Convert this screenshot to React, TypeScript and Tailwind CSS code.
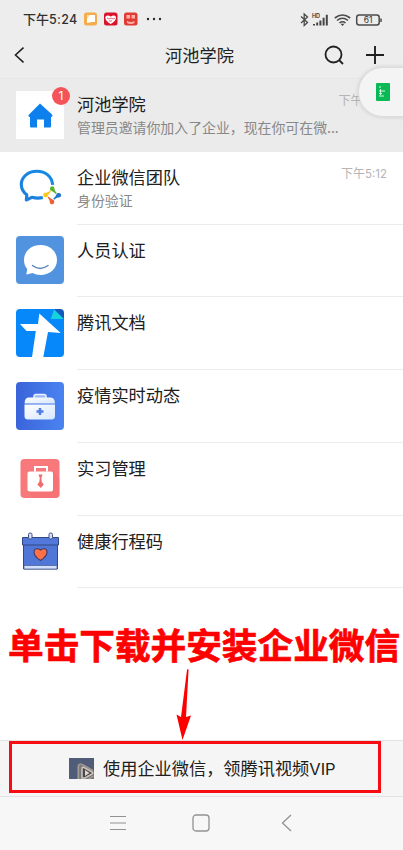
import React from "react";

const HouseIcon = () => (
  <svg viewBox="0 0 48 48" className="size-12 bg-white">
    <path d="M24 12.500 36 23.500q1.200 2.500-1 2.500v9.500q0 1-1 1h-6v-8h-7v8h-6q-1 0-1-1V26q-2.500 0-1-2.500Z" fill="#0e80ee" />
  </svg>
);

const WeComIcon = () => (
  <svg viewBox="0 0 48 48" className="size-12 overflow-visible">
    <defs>
      <linearGradient id="bubble" x1="0" y1="1" x2="1" y2="0">
        <stop offset="0" stopColor="#1d7fdc" />
        <stop offset="1" stopColor="#148be6" />
      </linearGradient>
    </defs>
    <path
      d="M36.700 21.800C35.800 13.500 29.500 8.300 20.800 8.300 12 8.300 5.300 14 5.300 21.500c0 4.300 2 7.700 5.500 10.300L10.300 37l5.500-2.700c3.800 1 7.400 1.100 11 .3"
      fill="none" stroke="url(#bubble)" strokeWidth="3.100" strokeLinejoin="round"
    />
    <path d="M36.200 24.500 44 32.200 36.200 40l-8-7.800Z" fill="#fff" />
    <path d="M34 25.500c.3-3.200 4.800-3 4.500.3.200 1.700 1 3 2.300 4.200l-1 1c-1.700-1.700-3.300-2.700-4.600-3.200-.8-.4-1.300-1.200-1.200-2.300Z" fill="#54b42a" />
    <path d="M42.800 30c3.300.3 3 4.700-.2 4.500-1.800.2-3.200 1-4.300 2.300l-1-1c1.700-1.700 2.700-3.300 3.200-4.600.4-.8 1.200-1.300 2.300-1.200Z" fill="#2277cc" />
    <path d="M38.300 39c-.3 3.200-4.700 3-4.500-.3-.2-1.700-1-3-2.300-4.200l1-1c1.700 1.700 3.300 2.700 4.600 3.200.8.400 1.300 1.200 1.200 2.300Z" fill="#ed6232" />
    <path d="M29.500 34.300c-3.200-.3-3-4.700.3-4.500 1.700-.2 3-1 4.200-2.300l1 1c-1.700 1.700-2.700 3.300-3.200 4.600-.4.800-1.200 1.300-2.300 1.200Z" fill="#fac71d" />
  </svg>
);

const SmileIcon = () => (
  <svg viewBox="0 0 48 48" className="size-12">
    <rect width="48" height="48" rx="4" fill="#5293df" />
    <path d="M24.500 9C34 9 41 15.500 41 24s-7 15-16.500 15c-3 0-5.500-.7-8-2-2.500.6-4 1-6.200 1.600L11.300 33C9 30.500 8 27.500 8 24 8 15.500 15 9 24.500 9Z" fill="#fff" />
    <path d="M16.500 29.500q7.500 6 15.500 0" fill="none" stroke="#5d86b8" strokeWidth="1.500" strokeLinecap="round" />
  </svg>
);

const DocsIcon = () => (
  <svg viewBox="0 0 48 48" className="size-12">
    <path d="M4 0h34.500L48 9.500V44q0 4-4 4H4q-4 0-4-4V4q0-4 4-4Z" fill="#0688fa" />
    <path d="M38 0h6q4 0 4 4v7Z" fill="#1559bd" />
    <path d="M38 .5 34.800 10H48Z" fill="#16d2dc" />
    <path d="M23.300 4.500 44.700 24 32 23 27.300 48H16l3.800-26H10.500L4 15h18Z" fill="#fff" />
  </svg>
);

const MedicalIcon = () => (
  <svg viewBox="0 0 48 48" className="size-12">
    <defs>
      <linearGradient id="med" x2="1"><stop stopColor="#3a64da" /><stop offset="1" stopColor="#4a83f0" /></linearGradient>
      <linearGradient id="kit" x2="1" y2="1"><stop stopColor="#fff" /><stop offset="1" stopColor="#d5e6fc" /></linearGradient>
    </defs>
    <rect width="48" height="48" rx="4" fill="url(#med)" />
    <path d="M18 16v-1.500q0-2 2-2h8q2 0 2 2V16" fill="#9db6f5" stroke="#edf3ff" strokeWidth="1.500" />
    <path d="M12.500 15.500h22q3 0 4 3l.5 3H8.500l.5-3q1-3 3.500-3Z" fill="url(#kit)" />
    <path d="M8.500 22.500h30.500V34q0 3.500-3.500 3.500H12q-3.500 0-3.500-3.500Z" fill="url(#kit)" />
    <path d="M24 26v7M20.500 29.500h7" stroke="#527be5" strokeWidth="2.500" />
  </svg>
);

const BriefcaseIcon = () => (
  <svg viewBox="0 0 48 48" className="size-12">
    <rect x="4.500" y="5" width="39" height="39" rx="4" fill="#f8797b" />
    <path d="m37 18 6.500 7v15q0 4-4 4H17l-6-7Z" fill="#ef6b6d" opacity=".4" />
    <path d="M19 17.500V13h12v4.500" fill="none" stroke="#fff" strokeWidth="2" />
    <rect x="11.500" y="17.500" width="25.500" height="20" rx="2" fill="#fff" />
    <path d="M22.500 20.500h4l-1 3h-2ZM23.800 23.500h1.500l.5 4.500 2 2.500-3 3.500-3.500-3.500 2-2.500Z" fill="#f16b6d" />
  </svg>
);

const CalendarIcon = () => (
  <svg viewBox="0 0 48 48" className="size-12">
    <path d="M7.500 15h34v27h-34Z" fill="#5076d8" stroke="#32497f" />
    <path d="M8 38.500h33V42H8Z" fill="#d2dfff" stroke="#44598e" strokeWidth=".7" />
    <path d="M6.500 10.500h36V18h-36Z" fill="#5378dc" stroke="#32497f" />
    <g fill="#d5defc" stroke="#3e527f"><rect x="12.500" y="6" width="3.500" height="6" rx="1.500" /><rect x="33" y="6" width="3.500" height="6" rx="1.500" /></g>
    <path d="M24.500 33.500c-11-7-6-15 0-10.500 6-4.500 11 3.500 0 10.500Z" fill="#ff7045" stroke="#3c3c68" strokeWidth="1.100" />
  </svg>
);

type Row = { title: string; sub?: string; time?: string; badge?: string; icon: React.ReactNode };

const rows: Row[] = [
  { title: "河池学院", sub: "管理员邀请你加入了企业，现在你可在微...", time: "5:24", badge: "1", icon: <HouseIcon /> },
  { title: "企业微信团队", sub: "身份验证", time: "5:12", icon: <WeComIcon /> },
  { title: "人员认证", icon: <SmileIcon /> },
  { title: "腾讯文档", icon: <DocsIcon /> },
  { title: "疫情实时动态", icon: <MedicalIcon /> },
  { title: "实习管理", icon: <BriefcaseIcon /> },
  { title: "健康行程码", icon: <CalendarIcon /> },
];

const StatusBar = () => (
  <div className="flex h-[38px] items-center justify-between pl-[23px] pr-[19px]">
    <div className="flex items-center">
      <span className="w-[54px] whitespace-nowrap text-[13px] font-medium leading-5 text-[#303030]">下午<span className="font-['Inter'] text-[12.500px] tracking-[0.3px]">5:24</span></span>
      <svg width="80" height="14" viewBox="0 0 80 14" className="ml-[7px]">
        <rect y=".5" width="13" height="13" rx="2.500" fill="#f5ac4b" />
        <path d="M3 3h8v7H8l-5 1Z" fill="#fff" /><path d="m3 3 3 0-3 4Z" fill="#ffdc9a" />
        <rect x="20" y=".5" width="13.500" height="13" rx="2.500" fill="#d9152d" />
        <path d="M26.700 12c-9-5-5-11 0-7.500 5-3.500 9 2.500 0 7.500Z" fill="#fff" />
        <path d="m23 6 2 1 2-1 2 1 2-1m-6 3h3" fill="none" stroke="#dd6b78" />
        <rect x="40" y=".5" width="13.500" height="13" rx="2.500" fill="#df3c35" />
        <path d="M42.500 3h3.500v3.500h-3.500zm5 0H51v3.500h-3.500zM43 9q4 2 7.500 0v2q-3.500 2-7.500 0Z" fill="#ffb1a5" />
        <g fill="#292929"><circle cx="64" cy="7" r="1.200" /><circle cx="70" cy="7" r="1.200" /><circle cx="76" cy="7" r="1.200" /></g>
      </svg>
    </div>
    <svg width="84" height="16" viewBox="0 0 84 16" className="mt-[2px]" fill="none" stroke="#4b4b4b">
      <path d="m1 4.500 6.500 6-3.300 3V2l3.300 3L1 11" strokeWidth="1.300" />
      <g fill="#454545" stroke="none">
        <path d="M13 12h2v1.500h-2zm3.200-1.500h2v3h-2zm3.200-2h2v5h-2zm3.200-2.700h2v7.700h-2zm3.200-3h2v10.700h-2z" />
      </g>
      <text x="12" y="6" fill="#333" stroke="none" className="font-['Inter'] text-[5.500px] font-semibold">HD</text>
      <path d="M34.800 6q7.700-6 15.400 0M37 8.500q5.500-4.500 11 0M39.500 11q3-2.500 6 0" strokeWidth="1.600" />
      <path d="m40.500 11.700 2 2.300 2-2.300Z" fill="#444" stroke="none" />
      <rect x="56.700" y="3" width="22.500" height="10" rx="2.500" strokeWidth="1.500" />
      <path d="M81 6.500v3.500" strokeWidth="1.500" />
      <text x="68" y="11" textAnchor="middle" fill="#333" stroke="none" className="font-['Inter'] text-[8.500px]">61</text>
    </svg>
  </div>
);

const Header = () => (
  <div className="grid h-[41px] grid-cols-[1fr_auto_1fr] items-center border-b border-[#e7e7e7] pl-[14px] pr-[19px] pb-[7px]">
    <svg width="10" height="18" viewBox="0 0 10 18" fill="none" stroke="#222" strokeWidth="1.600"><path d="M9.500 1.500 1.500 9l8 7.500" /></svg>
    <h1 className="ml-px text-[17.200px] leading-6 text-[#222]">河池学院</h1>
    <div className="flex justify-end gap-[22px]">
      <svg width="20" height="20" viewBox="0 0 20 20" fill="none" stroke="#202020" strokeWidth="1.800"><circle cx="9.500" cy="9.500" r="8" /><path d="m15 15 4 4" /></svg>
      <svg width="18" height="20" viewBox="0 0 18 20" fill="none" stroke="#202020" strokeWidth="1.900"><path d="M9 1v18M0 10h18" /></svg>
    </div>
  </div>
);

export default function App() {
  return (
    <div className="relative flex h-[850px] w-[403px] flex-col overflow-hidden bg-white font-['Noto_Sans_CJK_SC',sans-serif] text-[#202020]">
      <header className="bg-[#ededed]"><StatusBar /><Header /></header>
      <main className="flex-1">
        {rows.map((r, i) => (
          <div key={r.title} className={`flex h-[72.750px] pl-4 ${i === 0 ? "bg-[#ebebeb]" : ""}`}>
            <div className="relative mt-[11.500px] size-12 shrink-0">
              {r.icon}
              {r.badge && <span className="absolute -top-[4px] left-9 flex size-[18px] items-center justify-center rounded-full bg-[#f45458] font-['Inter'] text-[12px] text-white">{r.badge}</span>}
            </div>
            <div className={`ml-[13px] flex flex-1 justify-between border-b pr-4 ${i === 0 ? "border-[#ebebeb]" : "border-[#ececec]"}`}>
              <div className="pt-[12px]">
                <h2 className="whitespace-nowrap text-[17.200px] leading-[25px]">{r.title}</h2>
                {r.sub && <p className="w-64 whitespace-nowrap text-[13.900px] leading-[22px] text-[#888]">{r.sub}</p>}
              </div>
              {r.time && <time className="-ml-20 whitespace-nowrap pt-[11px] text-[12px] leading-5 text-[#b5b5b5]">下午<span className="font-['Inter'] text-[11.500px]">{r.time}</span></time>}
            </div>
          </div>
        ))}
      </main>
      <div className="flex h-[57px] items-center border-y border-[#e2e2e2] bg-[#f5f5f5] pl-[69px]">
        <svg width="25" height="21" viewBox="0 0 25 21">
          <rect width="25" height="21" fill="#505c78" />
          <path d="M8 21V9q0-5 6-3l9 5q2 1 2 3v7Z" fill="#77767a" />
          <path d="M9.500 21V9q0-4 4-2.500L24 12.500M24.500 18l-5 3" fill="none" stroke="#a49e98" strokeWidth="1.300" />
          <path d="M13 20V10.500q0-2 2-1l8 4.500q1.500 1 0 2L16 20Z" fill="#48464c" stroke="#cbc2b6" strokeWidth="1.600" />
          <path d="m16 12 4.500 3-4.500 3Z" fill="#ddd5ca" />
        </svg>
        <span className="ml-[9px] whitespace-nowrap text-[17.200px] leading-6">使用企业微信，领腾讯视频<span className="font-['Inter'] text-[16.500px]">VIP</span></span>
      </div>
      <nav className="flex h-[53px] items-start bg-[#f7f7f7] pl-[109px] pt-[17px]">
        <svg width="18" height="18" viewBox="0 0 18 18" stroke="#929292" strokeWidth="1.200"><path d="M1 2.500h16M1 9h16M1 15.500h16" /></svg>
        <svg width="18" height="18" viewBox="0 0 18 18" className="ml-[65px]" fill="none" stroke="#929292" strokeWidth="1.300"><rect x="1" y="1" width="16" height="16" rx="3" /></svg>
        <svg width="11" height="18" viewBox="0 0 11 18" className="ml-[71px]" fill="none" stroke="#929292" strokeWidth="1.300"><path d="M10 1 1.500 9l8.500 8" /></svg>
      </nav>
      <div className="absolute -right-6 top-[67px] flex h-[50px] w-[69px] items-center rounded-full border border-[#ddd] bg-[#f4f4f4] pl-[17px] shadow-[0_0_4px_rgba(0,0,0,0.14)]">
        <svg width="14" height="18" viewBox="0 0 14 18"><rect width="14" height="18" rx="1" fill="#08b956" /><path d="M3 4h2M3 8h6M3 10.500h3M3 13h5M4.500 6v6" stroke="#d5f8e2" /></svg>
      </div>
      <p className="absolute left-[8px] top-[622px] whitespace-nowrap text-[35.650px] font-bold leading-[44px] text-[#fe0000] [-webkit-text-stroke:0.7px_#fe0000]">单击下载并安装企业微信</p>
      <svg className="absolute left-[175px] top-[668px]" width="17" height="73" viewBox="0 0 17 73"><path d="M12.500 1q1.500 0 1 2L11 49l5-1.500L7.500 72 1.500 46.500 6 49 12 2Z" fill="#fe0000" /></svg>
      <div className="absolute left-[9px] top-[741px] h-[52px] w-[372px] border-[3.500px] border-[#f70c12]" />
    </div>
  );
}
